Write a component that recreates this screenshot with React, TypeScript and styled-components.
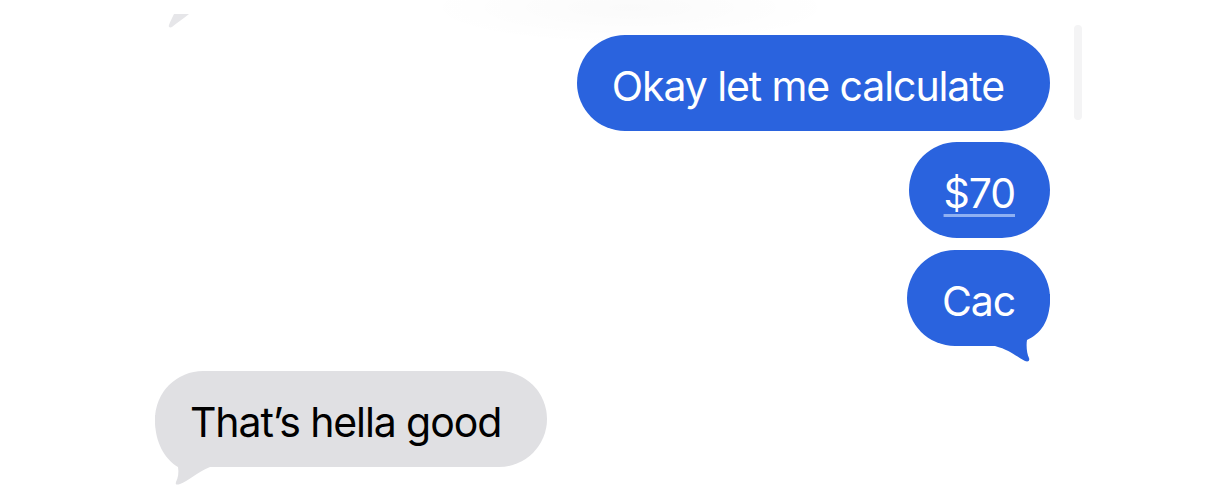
import React from "react";
import styled, { createGlobalStyle } from "styled-components";

const Global = createGlobalStyle`
  html, body { margin: 0; padding: 0; background: #ffffff; }
  body { font-family: Inter, "Noto Sans", "Liberation Sans", sans-serif; }
`;

const Screen = styled.div`
  position: relative;
  width: 1206px;
  height: 500px;
  overflow: hidden;
  background: #ffffff;
`;

const Thread = styled.div`
  display: flex;
  flex-direction: column;
  padding: 14px 156px 0 155px;
`;

const TopFade = styled.div`
  position: absolute;
  left: 420px;
  top: -30px;
  width: 420px;
  height: 75px;
  border-radius: 50%;
  background: radial-gradient(ellipse at center, rgba(0,0,0,0.018), rgba(0,0,0,0) 70%);
  pointer-events: none;
`;

const ScrollIndicator = styled.div`
  position: absolute;
  left: 1074px;
  top: 25px;
  width: 8px;
  height: 95px;
  border-radius: 4px;
  background: #f4f4f5;
`;

const CutTail = styled.svg`
  display: block;
  margin-left: 12px;
  width: 22px;
  height: 14px;
`;

const Row = styled.div<{ $side: "in" | "out"; $top: number }>`
  display: flex;
  justify-content: ${(p) => (p.$side === "out" ? "flex-end" : "flex-start")};
  margin-top: ${(p) => p.$top}px;
`;

const Bubble = styled.div<{ $side: "in" | "out"; $trail?: number }>`
  position: relative;
  z-index: 0;
  box-sizing: border-box;
  height: 96px;
  display: flex;
  align-items: center;
  padding: 5px ${(p) => 35 + (p.$trail ?? 0)}px 0 35px;
  border-radius: 48px;
  background: ${(p) => (p.$side === "out" ? "#2a63de" : "#e0e0e3")};
  color: ${(p) => (p.$side === "out" ? "#ffffff" : "#000000")};
  font-size: 41px;
  line-height: 50px;
  font-weight: 400;
  letter-spacing: -1.1px;
  white-space: nowrap;
`;

const Link = styled.span`
  text-decoration: underline;
  text-decoration-color: #8fb0f2;
  text-decoration-thickness: 3px;
  text-underline-offset: 6px;
`;

const Tail = styled.svg<{ $side: "in" | "out" }>`
  position: absolute;
  z-index: -1;
  width: 65px;
  height: 75px;
  top: 44px;
  ${(p) => (p.$side === "out" ? "right: -5px;" : "left: -5px;")}
`;

const OutTail = () => (
  <Tail $side="out" viewBox="0 0 65 75">
    <path
      d="M60 0 L60 5 C60 28 50 40 37 46 C36 52 37 60 39 64 C40 67 38 68 35 67 C27 63 20 56 5 52 L5 0 Z"
      fill="#2a63de"
    />
  </Tail>
);

const InTail = () => (
  <Tail $side="in" viewBox="0 0 65 75">
    <path
      d="M5 0 L5 5 C5 28 15 44 28 52 C29 58 28 63 26 67 C25 70 27 70 30 69 C38 66 46 58 60 52 L60 0 Z"
      fill="#e0e0e3"
    />
  </Tail>
);

export default function App() {
  return (
    <Screen>
      <Global />
      <TopFade />
      <Thread>
        <CutTail viewBox="0 0 22 14">
          <path d="M7 0 L22 0 C17 4 10 9 5 13 C3 14 1 13 2 11 C3 8 5 4 7 0 Z" fill="#e6e6e9" />
        </CutTail>
        <Row $side="out" $top={7}>
          <Bubble $side="out" $trail={11}>Okay let me calculate</Bubble>
        </Row>
        <Row $side="out" $top={11}>
          <Bubble $side="out">
            <Link>$70</Link>
          </Bubble>
        </Row>
        <Row $side="out" $top={12}>
          <Bubble $side="out">
            Cac
            <OutTail />
          </Bubble>
        </Row>
        <Row $side="in" $top={25}>
          <Bubble $side="in" $trail={11}>
            That’s hella good
            <InTail />
          </Bubble>
        </Row>
      </Thread>
      <ScrollIndicator />
    </Screen>
  );
}
